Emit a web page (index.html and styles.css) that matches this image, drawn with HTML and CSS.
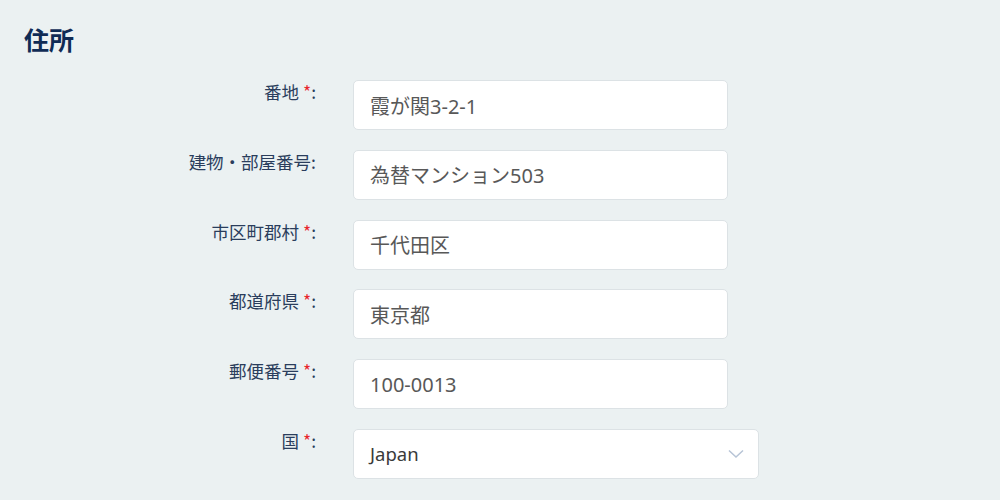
FILE: index.html
```html
<!DOCTYPE html>
<html lang="ja">
<head>
    <meta charset="UTF-8">
    <meta name="viewport" content="width=device-width, initial-scale=1.0">
    <title>住所</title>
    <link rel="stylesheet" href="styles.css">
</head>
<body>
    <section class="address">
        <h2 class="section-title">住所</h2>
        <form class="address-form">
            <label class="field-label">番地 <span class="req">*</span>:</label>
            <div class="field"><input class="text-input" type="text" value="霞が関3-2-1"></div>

            <label class="field-label">建物・部屋番号:</label>
            <div class="field"><input class="text-input" type="text" value="為替マンション503"></div>

            <label class="field-label">市区町郡村 <span class="req">*</span>:</label>
            <div class="field"><input class="text-input" type="text" value="千代田区"></div>

            <label class="field-label">都道府県 <span class="req">*</span>:</label>
            <div class="field"><input class="text-input" type="text" value="東京都"></div>

            <label class="field-label">郵便番号 <span class="req">*</span>:</label>
            <div class="field"><input class="text-input" type="text" value="100-0013"></div>

            <label class="field-label">国 <span class="req">*</span>:</label>
            <div class="field">
                <div class="select">
                    <span class="select-value">Japan</span>
                    <svg class="chevron" width="16" height="10" viewBox="0 0 16 10">
                        <path d="M1 1.5 L8 8 L15 1.5" fill="none" stroke="#b7c4d6" stroke-width="1.5"/>
                    </svg>
                </div>
            </div>
        </form>
    </section>
</body>
</html>
```

FILE: styles.css
```css
* {
    margin: 0;
    padding: 0;
    box-sizing: border-box;
}
body {
    background: #ebf1f2;
    font-family: 'Noto Sans', 'Noto Sans CJK JP', sans-serif;
    overflow: hidden;
}
.address {
    padding: 23px 24px 0 24px;
}
.section-title {
    font-size: 25px;
    line-height: 34px;
    font-weight: 700;
    color: #0f2b55;
    margin-bottom: 23px;
}
.address-form {
    display: grid;
    grid-template-columns: 292px 375px;
    column-gap: 37px;
    row-gap: 19.8px;
}
.field-label {
    text-align: right;
    font-size: 17.5px;
    line-height: 24px;
    color: #2a3d5c;
    font-family: 'Noto Sans CJK JP', sans-serif;
}
.req {
    color: #e8262b;
}
.text-input {
    width: 100%;
    height: 50px;
    border: 1px solid #dce2e5;
    border-radius: 5px;
    background: #fff;
    padding: 0 16px;
    font-family: 'Noto Sans', 'Noto Sans CJK JP', sans-serif;
    font-size: 20px;
    color: #585858;
    outline: none;
}
.select {
    width: 406px;
    height: 50px;
    border: 1px solid #dce2e5;
    border-radius: 5px;
    background: #fff;
    padding: 0 14px 0 16px;
    display: flex;
    align-items: center;
    justify-content: space-between;
}
.select-value {
    font-size: 18.5px;
    color: #3a3a3a;
}
.chevron {
    display: block;
}
```
